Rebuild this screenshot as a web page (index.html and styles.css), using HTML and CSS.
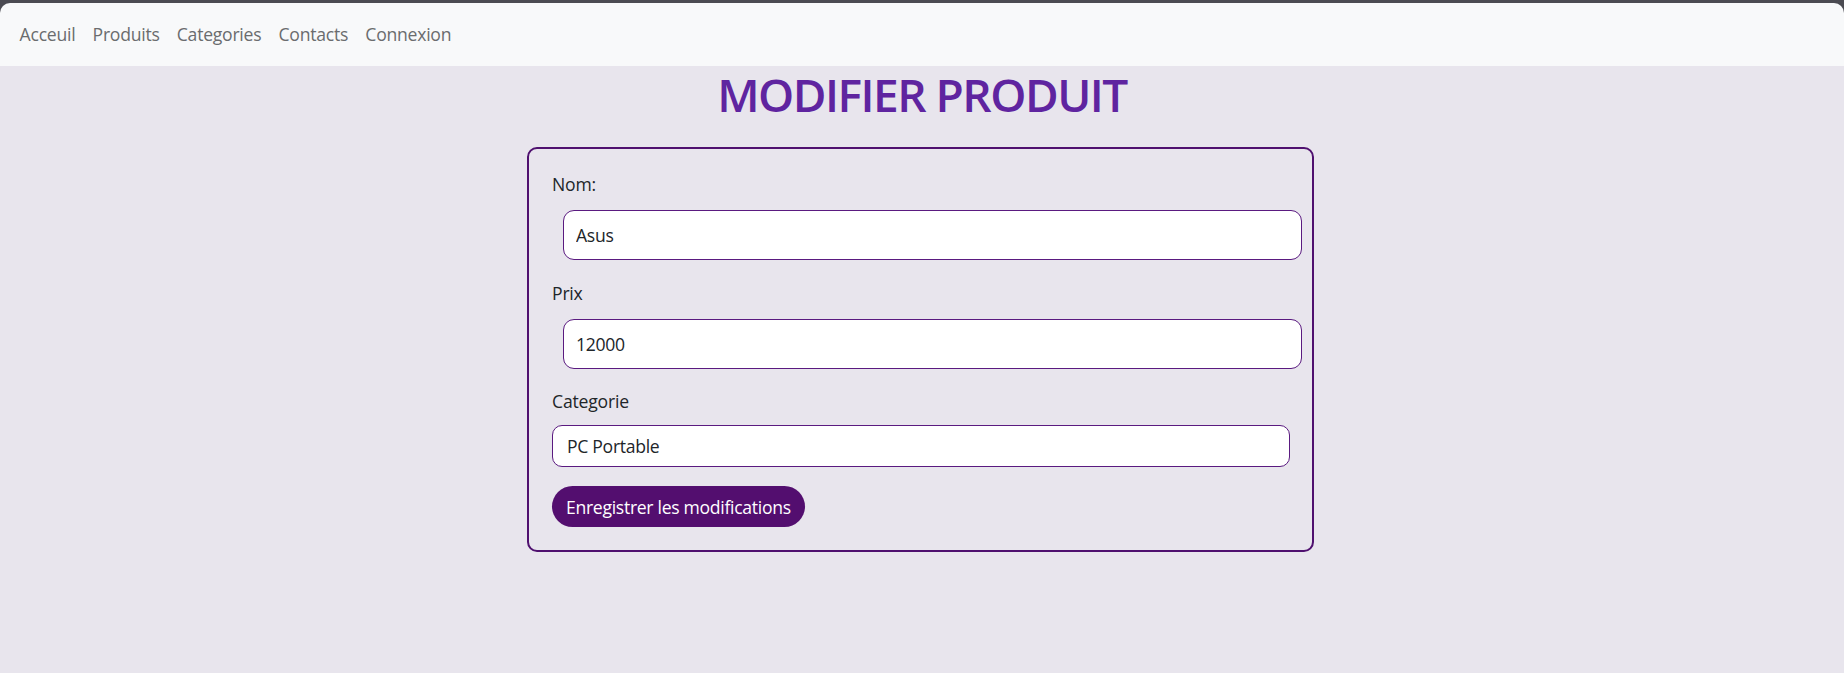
FILE: index.html
```html
<!DOCTYPE html>
<html lang="fr">
<head>
<meta charset="utf-8">
<title>Modifier produit</title>
<link rel="stylesheet" href="styles.css">
</head>
<body>
<div class="frame">
  <nav class="navbar">
    <a class="nav-link" href="#">Acceuil</a>
    <a class="nav-link" href="#">Produits</a>
    <a class="nav-link" href="#">Categories</a>
    <a class="nav-link" href="#">Contacts</a>
    <a class="nav-link" href="#">Connexion</a>
  </nav>
</div>
<main class="page">
  <h1 class="title">MODIFIER PRODUIT</h1>
  <form class="card">
    <label class="label">Nom:</label>
    <input class="field field-indent" type="text" value="Asus">
    <label class="label">Prix</label>
    <input class="field field-indent" type="text" value="12000">
    <label class="label label-tight">Categorie</label>
    <div class="select">PC Portable</div>
    <button class="btn" type="button">Enregistrer les modifications</button>
  </form>
</main>
</body>
</html>
```
FILE: styles.css
```css
html, body {
  margin: 0;
  padding: 0;
}
body {
  background: #e8e5ed;
  font-family: "Open Sans", "Noto Sans", sans-serif;
  color: #212529;
  font-size: 17.6px;
}
.frame {
  background: #4b4b52;
  padding-top: 3px;
}
.navbar {
  display: flex;
  align-items: center;
  box-sizing: border-box;
  height: 63px;
  padding: 0 10px 2px 11px;
  background: #f8f9fa;
  border-radius: 10px 10px 0 0;
}
.nav-link {
  color: #6a6c6e;
  text-decoration: none;
  padding: 0 8.6px;
  font-size: 17.6px;
  letter-spacing: -0.25px;
}
.page {
  display: flex;
  flex-direction: column;
  align-items: center;
}
.title {
  margin: 1px 0 25px;
  font-size: 46px;
  font-weight: 600;
  line-height: 1.2;
  color: #5f24a0;
  letter-spacing: -1.5px;
}
.card {
  width: 787px;
  box-sizing: border-box;
  margin-right: 3px;
  border: 2px solid #4f106f;
  border-radius: 10px;
  padding: 22px 11px 23px 23px;
  display: flex;
  flex-direction: column;
  align-items: flex-start;
}
.label {
  font-size: 17.6px;
  line-height: 26px;
  letter-spacing: -0.2px;
  margin-bottom: 13px;
}
.label-tight {
  margin-bottom: 11px;
}
.field {
  box-sizing: border-box;
  height: 50px;
  width: 739px;
  border: 1px solid #5a1a80;
  border-radius: 11px;
  background: #fff;
  font-family: inherit;
  font-size: 17.6px;
  letter-spacing: -0.3px;
  color: #212529;
  padding: 0 12px;
  margin-bottom: 19.5px;
  outline: none;
}
.field-indent {
  margin-left: 11px;
}
.select {
  box-sizing: border-box;
  height: 42px;
  width: 738px;
  border: 1px solid #5a1a80;
  border-radius: 10px;
  background: #fff;
  font-size: 17.6px;
  letter-spacing: -0.3px;
  display: flex;
  align-items: center;
  padding: 0 14px;
  margin-bottom: 19px;
}
.btn {
  height: 41px;
  border: none;
  border-radius: 21px;
  background: #530e6f;
  color: #fff;
  font-family: inherit;
  font-size: 17.6px;
  letter-spacing: -0.3px;
  padding: 0 14px;
}
```
